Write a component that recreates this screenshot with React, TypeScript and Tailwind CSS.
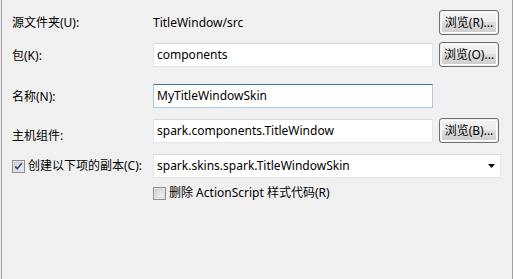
import React from "react";

function Btn({ label, className = "" }: { label: string; className?: string }) {
  return (
    <div
      className={
        "w-[60px] h-[25px] rounded-[3px] border border-[#707070] p-px shrink-0 " + className
      }
    >
      <div className="h-full w-full rounded-[2px] border border-[#fcfcfc] bg-[linear-gradient(to_bottom,#f2f2f2_0%,#ebebeb_50%,#dddddd_50%,#cfcfcf_100%)] flex items-center justify-center text-[12px] text-[#000] leading-none">
        {label}
      </div>
    </div>
  );
}

function Input({ value, focused = false }: { value: string; focused?: boolean }) {
  return (
    <div
      className={
        "w-[280px] h-[24px] bg-white flex items-center pl-[3px] text-[12px] text-black border " +
        (focused
          ? "border-[#a9cbe6] border-t-[#3d7bad]"
          : "border-[#e3e7ec] border-t-[#d6d9de]")
      }
    >
      {value}
    </div>
  );
}

function CheckBox({ checked }: { checked: boolean }) {
  return (
    <svg width="13" height="13" viewBox="0 0 13 13" className="shrink-0">
      <defs>
        <linearGradient id={checked ? "cbg1" : "cbg2"} x1="0" y1="0" x2="1" y2="1">
          <stop offset="0" stopColor="#cbcfd5" />
          <stop offset="1" stopColor="#f6f6f6" />
        </linearGradient>
      </defs>
      <rect x="0.5" y="0.5" width="12" height="12" fill="#f4f4f4" stroke="#8e8f8f" />
      <rect x="2" y="2" width="9" height="9" fill={`url(#${checked ? "cbg1" : "cbg2"})`} stroke="#c0c4ca" strokeWidth="0.6" />
      {checked && (
        <path d="M3.2 6.4 L5.3 8.8 L9.8 3.2" fill="none" stroke="#3b4d7d" strokeWidth="1.7" />
      )}
    </svg>
  );
}

export default function App() {
  return (
    <div
      className="w-[513px] h-[279px] bg-[#f0f0f0] pl-px overflow-hidden"
      style={{ fontFamily: '"Noto Sans", "Noto Sans CJK SC", sans-serif' }}
    >
      <div className="h-full border-x border-[#a0a0a0] pt-[10px] text-[12px] text-black">
        {/* Row 1 */}
        <div className="flex items-center h-[25px]">
          <div className="w-[151px] pl-[10px] pt-[1px]">源文件夹(U):</div>
          <div className="w-[286px]">TitleWindow/src</div>
          <Btn label="浏览(R)..." />
        </div>
        {/* Row 2 */}
        <div className="flex items-center h-[25px] mt-[7px]">
          <div className="w-[151px] pl-[10px] pt-[2px]">包(K):</div>
          <Input value="components" />
          <Btn label="浏览(O)..." className="ml-[6px]" />
        </div>
        {/* Row 3 */}
        <div className="flex items-center h-[24px] mt-[17px]">
          <div className="w-[151px] pl-[10px] pt-[2px]">名称(N):</div>
          <Input value="MyTitleWindowSkin" focused />
        </div>
        {/* Row 4 */}
        <div className="flex items-center h-[25px] mt-[10px]">
          <div className="w-[151px] pl-[10px] pt-[10px]">主机组件:</div>
          <Input value="spark.components.TitleWindow" />
          <Btn label="浏览(B)..." className="ml-[6px]" />
        </div>
        {/* Row 5 */}
        <div className="flex items-center h-[24px] mt-[11px]">
          <div className="w-[151px] pl-[10px] flex items-center gap-[3px]">
            <CheckBox checked />
            <span>创建以下项的副本(C):</span>
          </div>
          <div className="w-[348px] h-[24px] bg-white border border-[#e3e7ec] border-t-[#d6d9de] flex items-center pl-[3px] pr-[5px] justify-between">
            <span>spark.skins.spark.TitleWindowSkin</span>
            <svg width="7" height="4" viewBox="0 0 7 4">
              <path d="M0 0 H7 L3.5 4 Z" fill="#000" />
            </svg>
          </div>
        </div>
        {/* Row 6 */}
        <div className="flex items-center h-[14px] mt-[8px] pl-[151px] gap-[3px]">
          <CheckBox checked={false} />
          <span>删除 ActionScript 样式代码(R)</span>
        </div>
      </div>
    </div>
  );
}
